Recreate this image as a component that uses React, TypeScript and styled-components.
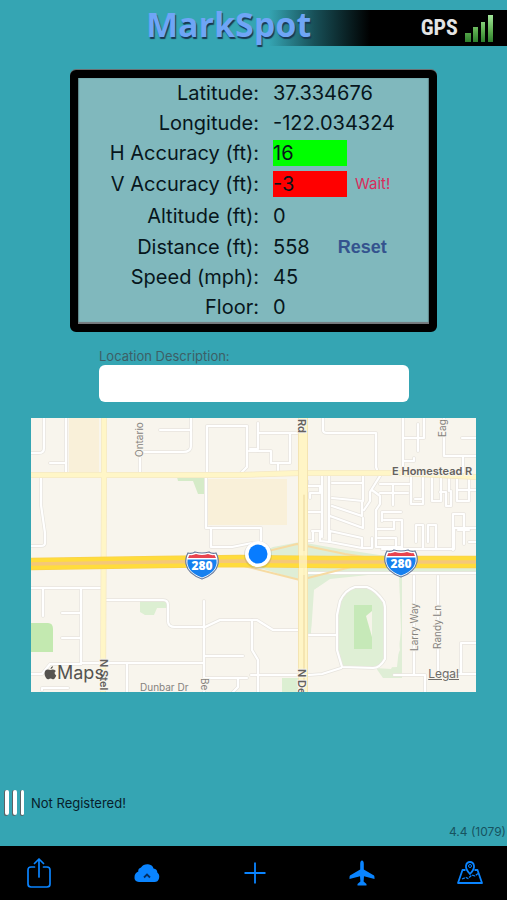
import React from 'react';
import styled, { createGlobalStyle } from 'styled-components';

const GlobalStyle = createGlobalStyle`
  * { box-sizing: border-box; }
  body { margin: 0; background: #35a5b3; font-family: Inter, "Liberation Sans", sans-serif; }
  button, input { font-family: inherit; }
`;

const Screen = styled.div`
  display: flex;
  flex-direction: column;
  min-height: 100vh;
  background: #35a5b3;
`;

const Header = styled.header`
  display: flex;
  align-items: center;
  justify-content: space-between;
  height: 36px;
  margin-top: 10px;
  padding: 0 13px 0 146px;
  background: linear-gradient(to right, transparent 53%, #185058 62%, #000 73%);
`;

const Title = styled.h1`
  margin: 0;
  padding-bottom: 8px;
  font: 700 34px/36px "Open Sans", "Noto Sans", sans-serif;
  color: #6fa5f6;
  text-shadow: 1px 2px 1px #173852;
`;

const Signal = styled.div`
  display: flex;
  align-items: center;
  gap: 7px;
  color: #e4e4e4;
  font: 700 22px/36px "Roboto Condensed", Roboto, sans-serif;
`;

const Panel = styled.section`
  margin: 24px 70px 0;
  padding-bottom: 2px;
  border: 8px solid #000;
  border-radius: 6px;
  background: #80b8bd;
  box-shadow: inset 0 -2px 1px #74777b, inset 1px 0 1px #5d8589, inset -1px 0 1px #5d8589, 0 -1px 0 #6b6f72;
`;

const Readings = styled.dl`
  margin: 0;
`;

const Reading = styled.div<{ $tall?: boolean }>`
  display: grid;
  grid-template-columns: 181fr 156fr;
  column-gap: 14px;
  align-items: center;
  height: ${(p) => (p.$tall ? 32 : 30)}px;
  font-size: 20px;
  line-height: 26px;
  color: #07161c;
`;

const Term = styled.dt`
  text-align: right;
  white-space: nowrap;
`;

const Detail = styled.dd`
  display: flex;
  align-items: center;
  margin: 0;
  white-space: nowrap;
`;

const Level = styled.span<{ $color: string }>`
  width: 74px;
  margin-right: 8px;
  background: ${(p) => p.$color};
`;

const Warning = styled.span`
  font-size: 15px;
  color: #d92c5c;
`;

const ResetButton = styled.button`
  margin-left: 28px;
  padding: 0;
  border: 0;
  background: none;
  color: #34538e;
  font: 700 18px/26px "Liberation Sans", sans-serif;
`;

const Field = styled.div`
  display: flex;
  flex-direction: column;
  margin: 15px 98px 0 99px;
`;

const FieldLabel = styled.label`
  font-size: 13px;
  line-height: 18px;
  color: #3d5f66;
`;

const FieldInput = styled.input`
  width: 100%;
  height: 37px;
  padding: 0 8px;
  border: 0;
  border-radius: 6px;
  background: #fff;
  font-size: 16px;
`;

const MapFrame = styled.section`
  position: relative;
  margin: 16px 31px 0;
`;

const MapSvg = styled.svg`
  display: block;
  width: 100%;
  height: auto;
`;

const MapBrand = styled.div`
  position: absolute;
  left: 13px;
  bottom: 8px;
  display: flex;
  align-items: center;
  font-size: 18px;
  line-height: 22px;
  color: #555350;
`;

const LegalLink = styled.a`
  position: absolute;
  right: 17px;
  bottom: 9px;
  font-size: 12px;
  line-height: 18px;
  color: #6e6c69;
  text-decoration: underline;
`;

const Status = styled.div`
  display: flex;
  align-items: center;
  gap: 6px;
  margin-top: auto;
  padding-left: 4px;
  font-size: 13px;
  line-height: 28px;
  color: #07202a;
`;

const MenuButton = styled.button`
  display: flex;
  padding: 0;
  border: 0;
  background: none;
`;

const Version = styled.div`
  padding: 6px 1px 5px 0;
  text-align: right;
  font-size: 12px;
  line-height: 18px;
  color: #17535f;
`;

const TabBar = styled.nav`
  display: flex;
  align-items: center;
  justify-content: space-between;
  height: 54px;
  padding: 0 15px 0 17px;
  background: #000;
`;

const TabButton = styled.button`
  display: flex;
  align-items: center;
  justify-content: center;
  width: 44px;
  height: 44px;
  padding: 0;
  border: 0;
  background: none;
  color: #0a84ff;
`;

const minorRoads = [
  'M44 418V448Q44 453 39 453H31',
  'M66 418V473', 'M50 463H66', 'M41 477V505L45 533V543Q45 546 41 546H31',
  'M140 457V473', 'M140 452H183Q191 452 191 446V418', 'M160 430H191',
  'M207 473V426H247V467L241 473', 'M249 451H258', 'M206 475V528H261V545', 'M211 528V547H232L252 543',
  'M258 423V449H250M258 433H298', 'M258 451H271V463H290V434M278 463V474',
  'M323 418V430Q323 433 327 433H376V467L379 475', 'M403 418V473M403 438H424M418 424V451M424 438V418M403 461H414V458',
  'M444 438V456H477M444 438V418M462 438H477M463 456V472',
  'M307 481V486H320V493H310V498M322 476V537M308 512H320M313 531V541H308M312 531H320V541L330 542',
  'M329 475V542M332 483H363M363 475V501L332 498M332 506L362 516V501M330 516L363 528V518M330 531L362 538V548L330 542V532M362 548H372V538',
  'M380 476L370 492V501L364 510M372 490L380 496V504L376 510V547H402V536M380 484H411V475M411 484V504H423V490M393 484V505M380 493H408',
  'M382 521V512H401M384 520H402V549M377 529H394V520M378 538H396V549M382 549H423V525H416V542M436 549V525H428V542M423 549H454V528H477',
  'M423 475V499H415M432 475V501H441V474M440 492H446V506H451V491M457 474V501H469V488M457 490H477M449 474V491M469 475V488',
  'M464 544V514H453V550M458 530H469M469 542H477',
  'M31 588H101M43 589V616M81 588V664M62 613H81M62 638H81',
  'M105 600H163Q168 600 168 605V621Q168 627 175 627H205L220 620H257L273 630H299',
  'M204 601V692M205 656H243M81 663H204M127 664V692M31 674H42L50 664H81M42 690V688H68M204 678H247M238 678V687L233 692M252 620V650L258 660V692',
  'M251 675H309L322 674L341 668', 'M309 635H337',
  'M414 576V675H394M438 576V674H477M461 674V643H477M394 675H425V692',
  'M305 573H477',
];

const trackPath = 'M342 667L337 650V615L340 601Q345 590 355 587H367Q376 590 384 602L385 607V659Q380 668 373 668Z';

const highway = 'M31 564L160 562L240 561L330 562H477';
const avenues = 'M31 475H240L300 473H400L477 477M104 418V483L103 692';
const ramps = 'M240 558L297 544L345 554L390 561M240 565L300 580L351 567L395 564';

function Shield({ x, y }: { x: number; y: number }) {
  return (
    <g transform={`translate(${x} ${y})`}>
      <path d="M-14-12Q-10-11-7-13Q0-11 7-13Q10-11 14-12Q17-7 16-1Q14 9 0 14Q-14 9-16-1Q-17-7-14-12Z" fill="#fff" stroke="#65799c" strokeWidth="1.2" />
      <path d="M-12.5-10Q-9-9.5-6-11Q0-9 6-11Q9-9.5 12.5-10L14-7H-14Z" fill="#e8434e" />
      <path d="M-14.5-5.5H14.5Q16 7 0 12.5Q-16 7-14.5-5.5Z" fill="#1680ef" />
      <text y="5" textAnchor="middle" fontFamily='"Open Sans", sans-serif' fontSize="12" fontWeight="800" fill="#fff">280</text>
    </g>
  );
}

function StreetMap() {
  return (
    <MapSvg viewBox="31 418 445 274" role="img" aria-label="Street map">
      <rect x="31" y="418" width="446" height="275" fill="#f8f5ed" />
      <path d="M69 418H99V473H69ZM208 479H287V525H208Z" fill="#f9f0d9" />
      <path d="M177 477H204V494H198L193 481H178Z" fill="#d5ebc8" />
      <path d="M31 623H48Q53 623 53 629V652H31Z" fill="#c3e9b0" />
      <path d="M140 601H167V608H157L154 615H145L140 612Z" fill="#dcefd2" />
      <path d="M240 562L273 547L300 542L340 549L386 556H420V563H476V573L402 574V678H383L376 668L397 667L401 630L399 575H368L330 579L314 590L311 634L299 635V580Z" fill="#dfeed6" />
      <path d="M314 590L330 580L368 576H397L400 600L397 630L400 650L391 669L375 668L385 658V607L376 590H346L337 612V633H311L314 610Z" fill="#f8f5ed" />
      <path d="M282 678H298V692H282Z" fill="#dcefd2" />
      <path d={trackPath} fill="#dfefd5" />
      <path d="M354 605H372V649H354Z" fill="#c6e9b8" />
      <path d="M366 616L372 611V637Z" fill="#f5f4e9" />
      <g fill="none" strokeLinecap="round" strokeLinejoin="round">
        <g stroke="#e7e4de" strokeWidth="3.6">
          {minorRoads.map((d) => <path key={d} d={d} />)}
          <path d={trackPath} />
        </g>
        <g stroke="#fff" strokeWidth="2.2">
          {minorRoads.map((d) => <path key={d} d={d} />)}
          <path d={trackPath} />
        </g>
        <path d={ramps} stroke="#f6dba2" strokeWidth="2" />
        <path d={avenues} stroke="#f5e8c4" strokeWidth="6" />
        <path d={avenues} stroke="#fff6c7" strokeWidth="4.5" />
        <path d="M303 418V692" stroke="#f0deab" strokeWidth="10" />
        <path d="M303 418V692" stroke="#fff5c6" strokeWidth="8.5" />
        <path d="M304 495V682" stroke="#efdba3" strokeWidth="1.2" />
      </g>
      <path d={highway} fill="none" stroke="#f9d24c" strokeWidth="12.5" />
      <path d={highway} fill="none" stroke="#ffdc3c" strokeWidth="11" />
      <path d={highway} fill="none" stroke="#f5c878" strokeWidth="3.5" />
      <path d="M299 551H307V575H299Z" fill="#fff5c6" opacity=".75" />
      <g fontFamily="Inter, sans-serif" fontSize="10" fill="#85827d" stroke="#f8f5ed" strokeWidth="2" paintOrder="stroke">
        <text transform="translate(143 457) rotate(-90)">Ontario</text>
        <text transform="translate(446 437) rotate(-90)">Eag</text>
        <text transform="translate(418 651) rotate(-90)">Larry Way</text>
        <text transform="translate(441 649) rotate(-90)">Randy Ln</text>
        <text transform="translate(201 678) rotate(90)">Be</text>
        <text transform="translate(140 691)">Dunbar Dr</text>
        <g fontSize="11" fontWeight="600" fill="#65625e">
          <text transform="translate(298 419) rotate(90)">Rd</text>
          <text transform="translate(298 669) rotate(90)">N De</text>
          <text transform="translate(100 659) rotate(90)">N Stel</text>
          <text x="392" y="475">E Homestead R</text>
        </g>
      </g>
      <Shield x={202} y={565} />
      <Shield x={401} y={563} />
      <circle cx="258" cy="555" r="14" fill="#64707a" opacity=".2" />
      <circle cx="258" cy="554" r="13" fill="#fff" />
      <circle cx="258" cy="554" r="9.5" fill="#087cff" />
    </MapSvg>
  );
}

const AppleIcon = () => (
  <svg width="13" height="16" viewBox="0 0 14 17" fill="currentColor" aria-hidden="true">
    <path d="M9.8 1Q9.7 3.7 7 4.4Q6.8 2.1 9.8 1ZM7 5.4Q9.9 3.8 12.8 6.3Q9.8 8.5 13.2 11.3Q11.4 16 9.3 15.1Q7 14 5 15.1Q2.6 16 .8 10.8Q-.2 4.9 4.3 4.7Q5.8 4.9 7 5.4Z" />
  </svg>
);

const SignalIcon = () => (
  <svg width="29" height="27" viewBox="0 0 29 27" aria-hidden="true">
    <defs>
      <linearGradient id="bars" x1="0" y1="0" x2="0" y2="27" gradientUnits="userSpaceOnUse">
        <stop stopColor="#a3e69a" /><stop offset=".6" stopColor="#5bac4e" /><stop offset="1" stopColor="#2d7e2c" />
      </linearGradient>
    </defs>
    <path d="M0 18H6V27H0ZM8 12H13V27H8ZM16 7H20V27H16ZM23 0H28V27H23Z" fill="url(#bars)" />
  </svg>
);

const MenuIcon = () => (
  <svg width="21" height="28" viewBox="0 0 21 28" aria-hidden="true">
    <g fill="#5b6265"><rect y="1" width="4" height="26" rx="2" /><rect x="8" y="1" width="4" height="26" rx="2" /><rect x="16" y="1" width="4" height="26" rx="2" /></g>
    <g fill="#fff"><rect x="1" y="1" width="4" height="25" rx="2" /><rect x="9" y="1" width="4" height="25" rx="2" /><rect x="17" y="1" width="3" height="25" rx="1.5" /></g>
  </svg>
);

const ShareIcon = () => (
  <svg width="24" height="30" viewBox="0 0 24 30" fill="none" stroke="currentColor" strokeWidth="1.7" strokeLinecap="round" strokeLinejoin="round">
    <path d="M7.5 9H4Q1 9 1 12V26Q1 29 4 29H20Q23 29 23 26V12Q23 9 20 9H16.5M12 19V1.5M7.5 5.5L12 1L16.5 5.5" />
  </svg>
);

const CloudIcon = () => (
  <svg width="26" height="19" viewBox="0 0 26 19">
    <path d="M5 18Q0 17.5 .5 13Q.5 9 4.3 7.5Q3.8 4.5 7 3.5Q9.5 0 14 .3Q18.5 .8 19.5 4.4Q23.3 5 23.3 8.5Q26 10.5 25 14.5Q24 18 20.5 18Z" fill="currentColor" />
    <path d="M10 13.5L13 10.5L16 13.5" fill="none" stroke="#062f60" strokeWidth="1.8" />
  </svg>
);

const PlusIcon = () => (
  <svg width="22" height="22" viewBox="0 0 22 22" stroke="currentColor" strokeWidth="1.8"><path d="M11 .5V21.5M.5 11H21.5" /></svg>
);

const PlaneIcon = () => (
  <svg width="26" height="26" viewBox="0 0 26 26" fill="currentColor">
    <path d="M13 .5Q14.8 .5 14.8 4V9.5L25 15.5Q25.7 16 25.5 19L15 16.2L14.6 21.5L17.5 24V25.5H8.5V24L11.4 21.5L11 16.2L.5 19Q.3 16 1 15.5L11.2 9.5V4Q11.2 .5 13 .5Z" />
  </svg>
);

const MapPinIcon = () => (
  <svg width="26" height="24" viewBox="0 0 26 24" fill="none" stroke="currentColor" strokeWidth="1.8" strokeLinejoin="round">
    <path d="M8.5 9H5.5L1 22H25L20.5 9H17.5" />
    <path d="M13 13Q8.5 8.2 9 4.8Q9.6 1 13 1Q16.4 1 17 4.8Q17.5 8.2 13 13Z" />
    <circle cx="13" cy="5" r="1.5" strokeWidth="1" />
    <path d="M5 18L9 16.5L11 17.5L15 14L18 15L21 12.5" strokeWidth="1.3" strokeDasharray="3 1" />
  </svg>
);

const tabs = [
  { label: 'Share', Icon: ShareIcon },
  { label: 'Upload', Icon: CloudIcon },
  { label: 'Add', Icon: PlusIcon },
  { label: 'Flight', Icon: PlaneIcon },
  { label: 'Map', Icon: MapPinIcon },
];

export default function App() {
  return (
    <>
      <GlobalStyle />
      <Screen>
        <Header>
          <Title>MarkSpot</Title>
          <Signal>GPS <SignalIcon /></Signal>
        </Header>
        <Panel>
          <Readings>
            <Reading><Term>Latitude:</Term><Detail>37.334676</Detail></Reading>
            <Reading><Term>Longitude:</Term><Detail>-122.034324</Detail></Reading>
            <Reading><Term>H Accuracy (ft):</Term><Detail><Level $color="#00ff00">16</Level></Detail></Reading>
            <Reading $tall><Term>V Accuracy (ft):</Term><Detail><Level $color="#ff0000">-3</Level><Warning>Wait!</Warning></Detail></Reading>
            <Reading $tall><Term>Altitude (ft):</Term><Detail>0</Detail></Reading>
            <Reading><Term>Distance (ft):</Term><Detail>558<ResetButton type="button">Reset</ResetButton></Detail></Reading>
            <Reading><Term>Speed (mph):</Term><Detail>45</Detail></Reading>
            <Reading><Term>Floor:</Term><Detail>0</Detail></Reading>
          </Readings>
        </Panel>
        <Field>
          <FieldLabel htmlFor="location">Location Description:</FieldLabel>
          <FieldInput id="location" type="text" />
        </Field>
        <MapFrame>
          <StreetMap />
          <MapBrand><AppleIcon />Maps</MapBrand>
          <LegalLink href="#legal">Legal</LegalLink>
        </MapFrame>
        <Status>
          <MenuButton type="button" aria-label="Menu"><MenuIcon /></MenuButton>
          Not Registered!
        </Status>
        <Version>4.4 (1079)</Version>
        <TabBar>
          {tabs.map(({ label, Icon }) => (
            <TabButton key={label} type="button" aria-label={label}><Icon /></TabButton>
          ))}
        </TabBar>
      </Screen>
    </>
  );
}
